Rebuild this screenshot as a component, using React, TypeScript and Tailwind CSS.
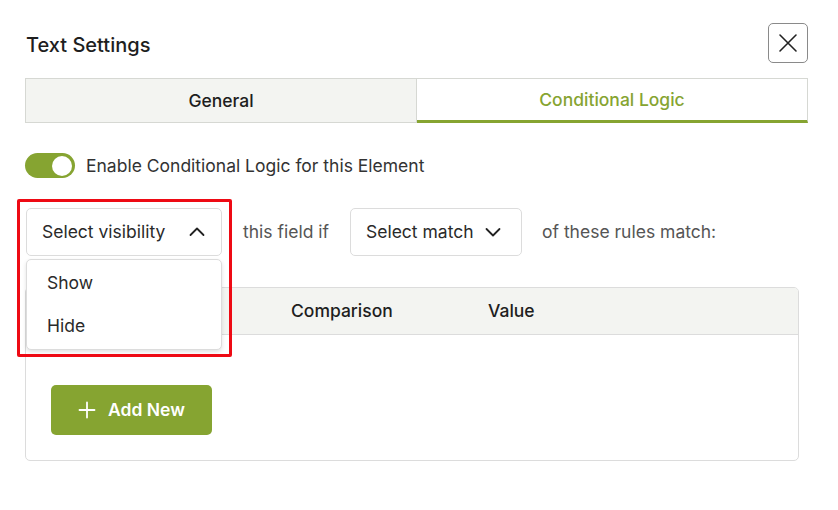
const green = "#86a431"

function ChevronUp() {
  return (
    <svg width="20" height="20" viewBox="0 0 20 20" fill="none" stroke="#222" strokeWidth="1.8" strokeLinecap="round" strokeLinejoin="round">
      <path d="M3.5 13 L10 6.5 L16.5 13" />
    </svg>
  )
}

function ChevronDown() {
  return (
    <svg width="20" height="20" viewBox="0 0 20 20" fill="none" stroke="#222" strokeWidth="1.8" strokeLinecap="round" strokeLinejoin="round">
      <path d="M3.5 7 L10 13.5 L16.5 7" />
    </svg>
  )
}

export default function App() {
  return (
    <div className="w-[838px] h-[510px] bg-white pl-[25px] pr-[30px] pt-[23px] text-[#222]" style={{ fontFamily: "Inter, 'Noto Sans', sans-serif" }}>
      <div className="flex items-center justify-between h-[40px]">
        <h1 className="pl-[1px] pt-[3px] text-[20px] font-medium text-[#1e1e1e]">Text Settings</h1>
        <button className="w-[40px] h-[40px] border border-[#8a8a8a] rounded-[5px] flex items-center justify-center">
          <svg width="20" height="20" viewBox="0 0 20 20" stroke="#222" strokeWidth="1.6" strokeLinecap="round">
            <path d="M2 2 L18 18 M18 2 L2 18" />
          </svg>
        </button>
      </div>

      <div className="mt-[15px] flex h-[45px] text-[17.5px] font-medium">
        <div className="flex-1 flex items-center justify-center pt-[1px] bg-[#f3f4f1] border border-[#d6d8d3] text-[#1e1e1e]">
          General
        </div>
        <div className="flex-1 flex items-center justify-center pt-[1px] bg-white border-t border-r border-[#d6d8d3] border-b-[3px] border-b-[#86a431] text-[#86a431]">
          Conditional Logic
        </div>
      </div>

      <div className="mt-[30px] flex items-center gap-[11px] h-[25px]">
        <div className="w-[50px] h-[25px] rounded-full flex items-center justify-end pr-[3px]" style={{ backgroundColor: green }}>
          <div className="w-[20px] h-[20px] rounded-full bg-white" />
        </div>
        <span className="pt-[2px] text-[17.5px] text-[#333]">Enable Conditional Logic for this Element</span>
      </div>

      <div className="mt-[30px] flex items-center h-[48px] pl-[1px] text-[17.5px]">
        <div className="relative">
          <div className="w-[196px] h-[48px] border border-[#dcdcdc] rounded-[5px] flex items-center justify-between pl-[15px] pr-[14px] text-[#2a2a2a]">
            <span className="pt-[1px]">Select visibility</span>
            <ChevronUp />
          </div>
          <div className="absolute left-0 top-[51px] w-[196px] h-[91px] bg-white border border-[#dcdcdc] rounded-[5px] shadow-[0_2px_4px_rgba(0,0,0,0.12)] flex flex-col py-[1px] z-10">
            <div className="h-[45px] flex items-center pl-[20px] text-[#2a2a2a]">Show</div>
            <div className="h-[45px] flex items-center pl-[20px] text-[#2a2a2a]">Hide</div>
          </div>
          <div className="absolute left-[-9px] top-[-9px] w-[215px] h-[158px] border-[3px] border-[#ee0a14] rounded-[2px] z-20 pointer-events-none" />
        </div>
        <span className="ml-[21px] pt-[1px] text-[#555]">this field if</span>
        <div className="ml-[21px] w-[172px] h-[48px] border border-[#dcdcdc] rounded-[5px] flex items-center justify-between pl-[15px] pr-[18px] text-[#2a2a2a]">
          <span className="pt-[1px]">Select match</span>
          <ChevronDown />
        </div>
        <span className="ml-[20px] pt-[1px] text-[#555]">of these rules match:</span>
      </div>

      <div className="mt-[31px] w-[774px] h-[174px] border border-[#dcdcdc] rounded-[5px] overflow-hidden">
        <div className="h-[47px] bg-[#f3f4f1] border-b border-[#dcdcdc] flex items-center pt-[1px] text-[17.5px] font-medium text-[#1e1e1e]">
          <span className="w-[265px]" />
          <span className="w-[197px]">Comparison</span>
          <span>Value</span>
        </div>
        <div className="pt-[50px] pl-[25px]">
          <button className="w-[161px] h-[50px] rounded-[5px] flex items-center justify-center gap-[12px] text-white text-[17.5px] font-semibold" style={{ backgroundColor: green }}>
            <svg width="18" height="18" viewBox="0 0 18 18" stroke="white" strokeWidth="1.8" strokeLinecap="round">
              <path d="M9 1.5 V16.5 M1.5 9 H16.5" />
            </svg>
            <span className="pt-[1px]">Add New</span>
          </button>
        </div>
      </div>
    </div>
  )
}
